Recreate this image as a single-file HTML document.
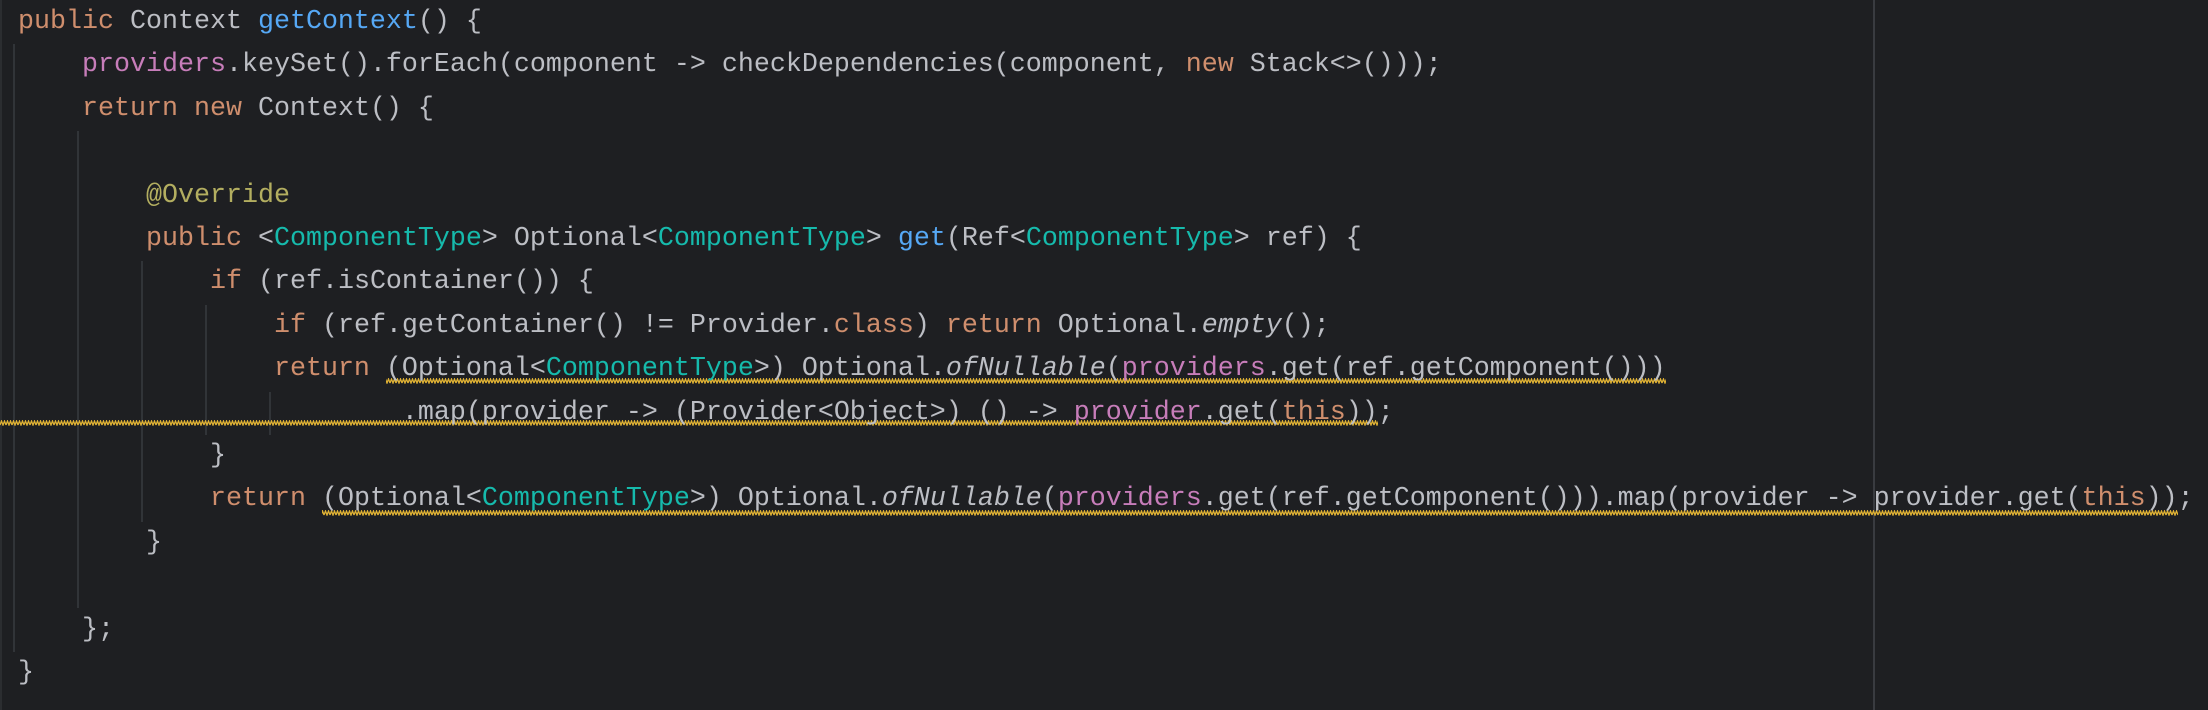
<!DOCTYPE html>
<html><head><meta charset="utf-8"><style>
html,body{margin:0;padding:0;}
body{width:2208px;height:710px;background:#1e1f22;overflow:hidden;position:relative;font-family:"Liberation Mono",monospace;}
.code{position:absolute;left:18px;top:1px;font-size:26.67px;line-height:43.4px;color:#bcbec4;white-space:pre;}
.k{color:#cf8e6d}.m{color:#56a8f5}.f{color:#c77dba}.t{color:#16baac}.a{color:#b3ae60}.i{font-style:italic}
.g{position:absolute;width:2px;background:#313438;}
</style></head><body>
<div style="position:absolute;left:0;top:0;width:2px;height:710px;background:#2b2d30"></div>
<div class="g" style="left:13px;top:44px;height:608px"></div>
<div class="g" style="left:77px;top:131px;height:477px"></div>
<div class="g" style="left:141px;top:261px;height:261px"></div>
<div class="g" style="left:205px;top:305px;height:130px"></div>
<div class="g" style="left:269px;top:392px;height:43px"></div>
<div style="position:absolute;left:1873px;top:0;width:2px;height:710px;background:#393b40"></div>
<svg width="2208" height="710" style="position:absolute;left:0;top:0">
<defs><pattern id="z" x="0" y="0" width="6" height="6" patternUnits="userSpaceOnUse"><path d="M0 5 L1.5 1 L3 5 L4.5 1 L6 5" fill="none" stroke="#e0b234" stroke-width="1.3"/></pattern></defs>
<rect x="386" y="378" width="1280" height="6" fill="url(#z)" transform="translate(0,0)"/>
<rect x="0" y="420" width="1378" height="6" fill="url(#z)"/>
<rect x="322" y="510" width="1856" height="6" fill="url(#z)"/>
</svg>
<div class="code"><span class="k">public</span> Context <span class="m">getContext</span>() {
    <span class="f">providers</span>.keySet().forEach(component -&gt; checkDependencies(component, <span class="k">new</span> Stack&lt;&gt;()));
    <span class="k">return new</span> Context() {

        <span class="a">@Override</span>
        <span class="k">public</span> &lt;<span class="t">ComponentType</span>&gt; Optional&lt;<span class="t">ComponentType</span>&gt; <span class="m">get</span>(Ref&lt;<span class="t">ComponentType</span>&gt; ref) {
            <span class="k">if</span> (ref.isContainer()) {
                <span class="k">if</span> (ref.getContainer() != Provider.<span class="k">class</span>) <span class="k">return</span> Optional.<span class="i">empty</span>();
                <span class="k">return</span> (Optional&lt;<span class="t">ComponentType</span>&gt;) Optional.<span class="i">ofNullable</span>(<span class="f">providers</span>.get(ref.getComponent()))
                        .map(provider -&gt; (Provider&lt;Object&gt;) () -&gt; <span class="f">provider</span>.get(<span class="k">this</span>));
            }
            <span class="k">return</span> (Optional&lt;<span class="t">ComponentType</span>&gt;) Optional.<span class="i">ofNullable</span>(<span class="f">providers</span>.get(ref.getComponent())).map(provider -&gt; provider.get(<span class="k">this</span>));
        }

    };
}</div>
</body></html>
